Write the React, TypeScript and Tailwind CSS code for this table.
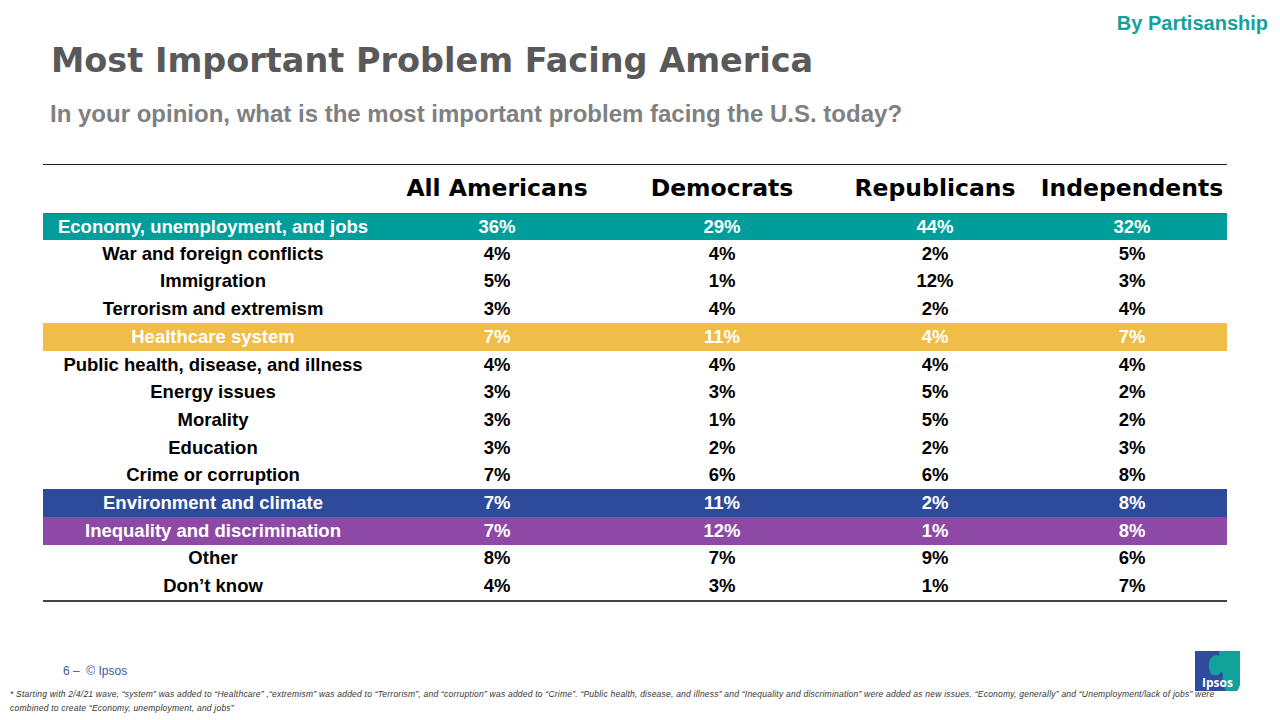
import React from "react"

type Row = {
  label: string
  values: string[]
  tone?: "teal" | "gold" | "blue" | "purple"
}

const rows: Row[] = [
  { label: "Economy, unemployment, and jobs", values: ["36%", "29%", "44%", "32%"], tone: "teal" },
  { label: "War and foreign conflicts", values: ["4%", "4%", "2%", "5%"] },
  { label: "Immigration", values: ["5%", "1%", "12%", "3%"] },
  { label: "Terrorism and extremism", values: ["3%", "4%", "2%", "4%"] },
  { label: "Healthcare system", values: ["7%", "11%", "4%", "7%"], tone: "gold" },
  { label: "Public health, disease, and illness", values: ["4%", "4%", "4%", "4%"] },
  { label: "Energy issues", values: ["3%", "3%", "5%", "2%"] },
  { label: "Morality", values: ["3%", "1%", "5%", "2%"] },
  { label: "Education", values: ["3%", "2%", "2%", "3%"] },
  { label: "Crime or corruption", values: ["7%", "6%", "6%", "8%"] },
  { label: "Environment and climate", values: ["7%", "11%", "2%", "8%"], tone: "blue" },
  { label: "Inequality and discrimination", values: ["7%", "12%", "1%", "8%"], tone: "purple" },
  { label: "Other", values: ["8%", "7%", "9%", "6%"] },
  { label: "Don’t know", values: ["4%", "3%", "1%", "7%"] },
]

const toneClass = {
  teal: "bg-[#009e9a] text-white border-t border-[#3d6e6c]",
  gold: "bg-[#f0bd47] text-white",
  blue: "bg-[#2e4a9b] text-white",
  purple: "bg-[#8d49a5] text-white",
}

const headers = ["All Americans", "Democrats", "Republicans", "Independents"]
const grid = "grid grid-cols-[340px_228px_222px_204px_190px]"

const IpsosLogo = () => (
  <svg width="45" height="40" viewBox="0 0 45 40">
    <path d="M0 0 H45 V30 Q45 36 42 40 H0 Z" fill="#2e4b9c" />
    <path d="M24 0 H45 V30 Q45 36 42 40 H31 Q26 30 28 23 Q26 21 25 18 Z" fill="#11a39b" />
    {/* head silhouette */}
    <path
      d="M16 23 Q13 18 14 12 Q15 5 21 4 Q27 4 28 10 Q29 13 30 15 L28 16 Q29 19 27 20 Q25 21 24 24 Q20 25 16 23 Z"
      fill="#11a39b"
    />
    <text
      x="22.5"
      y="36"
      textAnchor="middle"
      fill="#ffffff"
      fontFamily="'Open Sans', 'Liberation Sans', sans-serif"
      fontWeight="700"
      fontSize="12"
    >
      Ipsos
    </text>
  </svg>
)

export default function App() {
  return (
    <div className="w-[1280px] h-[720px] overflow-hidden bg-white font-['Liberation_Sans',Arial,sans-serif]">
      {/* Section tag */}
      <div className="pt-[13px] pr-[12px] text-right text-[20px] leading-none font-bold text-[#15a09a]">
        By Partisanship
      </div>

      {/* Title block */}
      <h1 className="mt-[11px] ml-[51px] font-['DejaVu_Sans',sans-serif] text-[33.5px] leading-none font-bold text-[#595959]">
        Most Important Problem Facing America
      </h1>
      <p className="mt-[24px] ml-[50px] text-[24px] leading-none font-bold text-[#808080]">
        In your opinion, what is the most important problem facing the U.S. today?
      </p>

      {/* Table */}
      <div className="mt-[38px] ml-[43px] w-[1184px] border-t border-[#222] border-b-2 border-b-[#444]">
        <div className={`${grid} h-[48px] items-center pt-[1px]`}>
          <div />
          {headers.map((h) => (
            <div
              key={h}
              className="text-center font-['DejaVu_Sans',sans-serif] text-[23.5px] font-bold text-black"
            >
              {h}
            </div>
          ))}
        </div>
        {rows.map((r) => (
          <div
            key={r.label}
            className={`${grid} h-[27.7px] items-center text-[18.5px] font-bold leading-none ${
              r.tone ? toneClass[r.tone] : "text-black"
            }`}
          >
            <div className="text-center">{r.label}</div>
            {r.values.map((v, i) => (
              <div key={i} className="text-center">
                {v}
              </div>
            ))}
          </div>
        ))}
      </div>

      {/* Footer */}
      <div className="mt-[49px] flex h-[40px] items-center justify-between pl-[63px] pr-[40px]">
        <div className="text-[12px] leading-none text-[#3b5a9c]">6 – &nbsp;© Ipsos</div>
        <IpsosLogo />
      </div>
      <p className="-mt-[4px] pl-[10px] text-[8.5px] leading-[14px] italic tracking-[0.22px] text-[#333]">
        * Starting with 2/4/21 wave, “system” was added to “Healthcare” ,“extremism” was added to “Terrorism”, and
        “corruption” was added to “Crime”. “Public health, disease, and illness” and “Inequality and discrimination”
        were added as new issues. “Economy, generally” and “Unemployment/lack of jobs” were
        <br />
        combined to create “Economy, unemployment, and jobs”
      </p>
    </div>
  )
}
